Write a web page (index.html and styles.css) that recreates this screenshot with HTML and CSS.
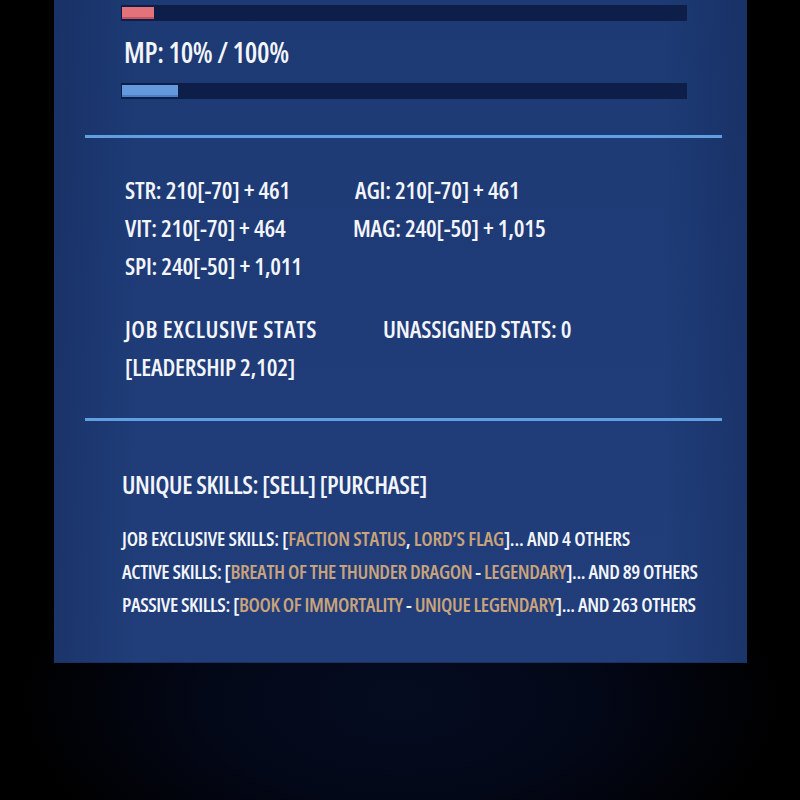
FILE: index.html
```html
<!DOCTYPE html>
<html>
<head>
<meta charset="utf-8">
<link rel="stylesheet" href="styles.css">
</head>
<body>
<div class="stage">
  <div class="panel">
    <div class="bar bar-hp"><div class="fill fill-hp" style="width:32px"></div></div>
    <div class="mp-label">MP: 10% / 100%</div>
    <div class="bar bar-mp"><div class="fill fill-mp" style="width:56px"></div></div>
    <div class="divider divider-1"></div>
    <div class="stats">
      <div class="stat">STR: 210[-70] + 461</div>
      <div class="stat agi">AGI: 210[-70] + 461</div>
      <div class="stat">VIT: 210[-70] + 464</div>
      <div class="stat">MAG: 240[-50] + 1,015</div>
      <div class="stat">SPI: 240[-50] + 1,011</div>
    </div>
    <div class="job">
      <div class="job-left">
        <div class="stat wide">JOB EXCLUSIVE STATS</div>
        <div class="stat">[LEADERSHIP 2,102]</div>
      </div>
      <div class="stat">UNASSIGNED STATS: 0</div>
    </div>
    <div class="divider divider-2"></div>
    <div class="unique">UNIQUE SKILLS: [SELL] [PURCHASE]</div>
    <div class="skills">
      <div class="skill skill-job">JOB EXCLUSIVE SKILLS: [<span class="gold">FACTION STATUS</span>, <span class="gold">LORD’S FLAG</span>]... AND 4 OTHERS</div>
      <div class="skill">ACTIVE SKILLS: [<span class="gold">BREATH OF THE THUNDER DRAGON</span> - <span class="gold">LEGENDARY</span>]... AND 89 OTHERS</div>
      <div class="skill">PASSIVE SKILLS: [<span class="gold">BOOK OF IMMORTALITY</span> - <span class="gold">UNIQUE LEGENDARY</span>]... AND 263 OTHERS</div>
    </div>
  </div>
</div>
</body>
</html>
```
FILE: styles.css
```css
html, body {
  margin: 0;
  padding: 0;
}
body {
  background: #000;
  width: 800px;
  height: 800px;
  overflow: hidden;
  font-family: "Open Sans", "Noto Sans", sans-serif;
  font-stretch: 75%;
  font-weight: 600;
  color: #f3f5fb;
  white-space: nowrap;
}
.stage {
  width: 800px;
  height: 800px;
  background: radial-gradient(ellipse 380px 200px at 400px 700px, #050c20 0%, #030818 50%, #000 100%);
}
.panel {
  margin-left: 54px;
  width: 693px;
  height: 663px;
  background:
    linear-gradient(90deg, rgba(10, 25, 60, 0.25) 0%, rgba(10, 25, 60, 0) 12%, rgba(10, 25, 60, 0) 88%, rgba(10, 25, 60, 0.25) 100%),
    linear-gradient(180deg, #1d3a74 0%, #1f3c78 50%, #213e7a 100%);
  border-bottom: 1px solid #1a3163;
  box-sizing: border-box;
  display: flex;
  flex-direction: column;
}
.bar {
  margin-left: 67px;
  width: 566px;
  height: 16px;
  background: #0d1f48;
  box-sizing: border-box;
  padding: 2px 0 2px 1px;
}
.bar-hp { margin-top: 5px; }
.bar-mp { margin-top: 15px; }
.fill {
  height: 12px;
  box-sizing: border-box;
}
.fill-hp {
  background: #e3727b;
  border-bottom: 2px solid #c25560;
}
.fill-mp {
  background: #6499de;
  border-bottom: 2px solid #4c7fc4;
}
.mp-label {
  margin-left: 70px;
  margin-top: 16px;
  font-size: 28px;
  line-height: 31px;
  height: 31px;
  letter-spacing: -0.3px;
}
.divider {
  margin-left: 31px;
  width: 637px;
  height: 3px;
  background: #5f9fe2;
}
.divider-1 { margin-top: 36px; }
.stats {
  margin-top: 33px;
  margin-left: 71px;
  display: grid;
  grid-template-columns: 228px auto;
}
.stat {
  font-size: 24px;
  line-height: 38px;
  letter-spacing: -0.2px;
}
.stat.wide { letter-spacing: 0.5px; }
.agi { margin-left: 2px; }
.job {
  margin-top: 25px;
  margin-left: 71px;
  display: flex;
}
.job-left {
  width: 258px;
  display: flex;
  flex-direction: column;
}
.divider-2 { margin-top: 32px; }
.unique {
  margin-top: 50px;
  margin-left: 68px;
  font-size: 25px;
  line-height: 27px;
  letter-spacing: -0.4px;
}
.skills {
  margin-top: 24px;
  margin-left: 68px;
  display: flex;
  flex-direction: column;
}
.skill {
  font-size: 20px;
  line-height: 33px;
  letter-spacing: -0.4px;
}
.skill-job { letter-spacing: -0.2px; }
.gold { color: #c9a37c; }
```
